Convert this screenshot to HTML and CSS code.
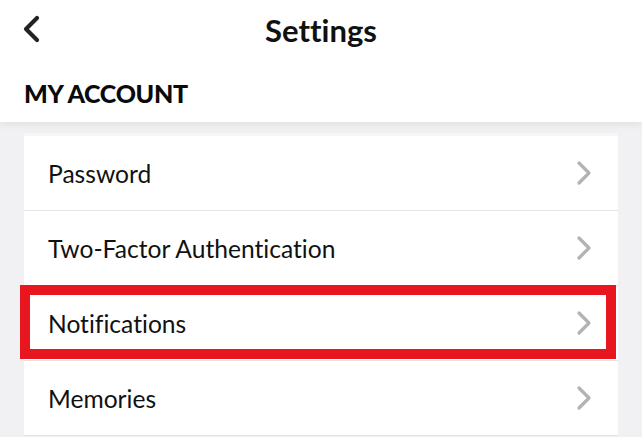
FILE: index.html
```html
<!DOCTYPE html>
<html>
<head>
<meta charset="utf-8">
<link rel="stylesheet" href="styles.css">
</head>
<body>
<header class="top">
  <div class="nav">
    <svg class="back" width="20" height="28" viewBox="0 0 20 28"><path d="M16 3 L5 14 L16 25" fill="none" stroke="#222" stroke-width="4.2" stroke-linecap="round" stroke-linejoin="round"/></svg>
    <h1 class="title">Settings</h1>
  </div>
  <div class="section">MY ACCOUNT</div>
</header>
<main class="content">
  <div class="card">
    <div class="row"><span>Password</span><svg class="chev" width="18" height="26" viewBox="0 0 18 26"><path d="M4 3 L14 13 L4 23" fill="none" stroke="#b3b3b3" stroke-width="3.2" stroke-linecap="round" stroke-linejoin="round"/></svg></div>
    <div class="row"><span>Two-Factor Authentication</span><svg class="chev" width="18" height="26" viewBox="0 0 18 26"><path d="M4 3 L14 13 L4 23" fill="none" stroke="#b3b3b3" stroke-width="3.2" stroke-linecap="round" stroke-linejoin="round"/></svg></div>
    <div class="row highlight"><span>Notifications</span><svg class="chev" width="18" height="26" viewBox="0 0 18 26"><path d="M4 3 L14 13 L4 23" fill="none" stroke="#b3b3b3" stroke-width="3.2" stroke-linecap="round" stroke-linejoin="round"/></svg></div>
    <div class="row"><span>Memories</span><svg class="chev" width="18" height="26" viewBox="0 0 18 26"><path d="M4 3 L14 13 L4 23" fill="none" stroke="#b3b3b3" stroke-width="3.2" stroke-linecap="round" stroke-linejoin="round"/></svg></div>
  </div>
</main>
</body>
</html>
```
FILE: styles.css
```css
html, body { margin: 0; padding: 0; }
body {
  width: 642px;
  height: 437px;
  overflow: hidden;
  background: #f1f1f3;
  font-family: "Lato", "Noto Sans", sans-serif;
  font-variant-ligatures: none;
  color: #111;
}
.top {
  background: #fff;
  height: 122px;
  box-shadow: 0 2px 8px rgba(0,0,0,0.08);
  position: relative;
  z-index: 1;
}
.nav {
  height: 60px;
  display: flex;
  align-items: center;
  justify-content: center;
  position: relative;
}
.back {
  position: absolute;
  left: 21px;
  top: 15px;
}
.title {
  margin: 0;
  font-size: 31px;
  font-weight: 700;
  color: #111;
}
.section {
  padding: 18px 0 0 24px;
  font-size: 25px;
  font-weight: 900;
  color: #0a0a0a;
  letter-spacing: -0.3px;
}
.content {
  padding: 11px 24px 0 24px;
}
.card {
  background: #fff;
  border-top: 3px solid #f6f6f6;
}
.row {
  height: 74px;
  border-bottom: 1px solid #e4e4e4;
  display: flex;
  align-items: center;
  justify-content: space-between;
  padding: 0 25px 0 24px;
  font-size: 24.6px;
  color: #111;
  position: relative;
}
.chev { display: block; }
.highlight::after {
  content: "";
  position: absolute;
  left: -4px;
  right: 2px;
  top: -1px;
  bottom: 1px;
  border: 10px solid #e8171f;
  pointer-events: none;
}
```
